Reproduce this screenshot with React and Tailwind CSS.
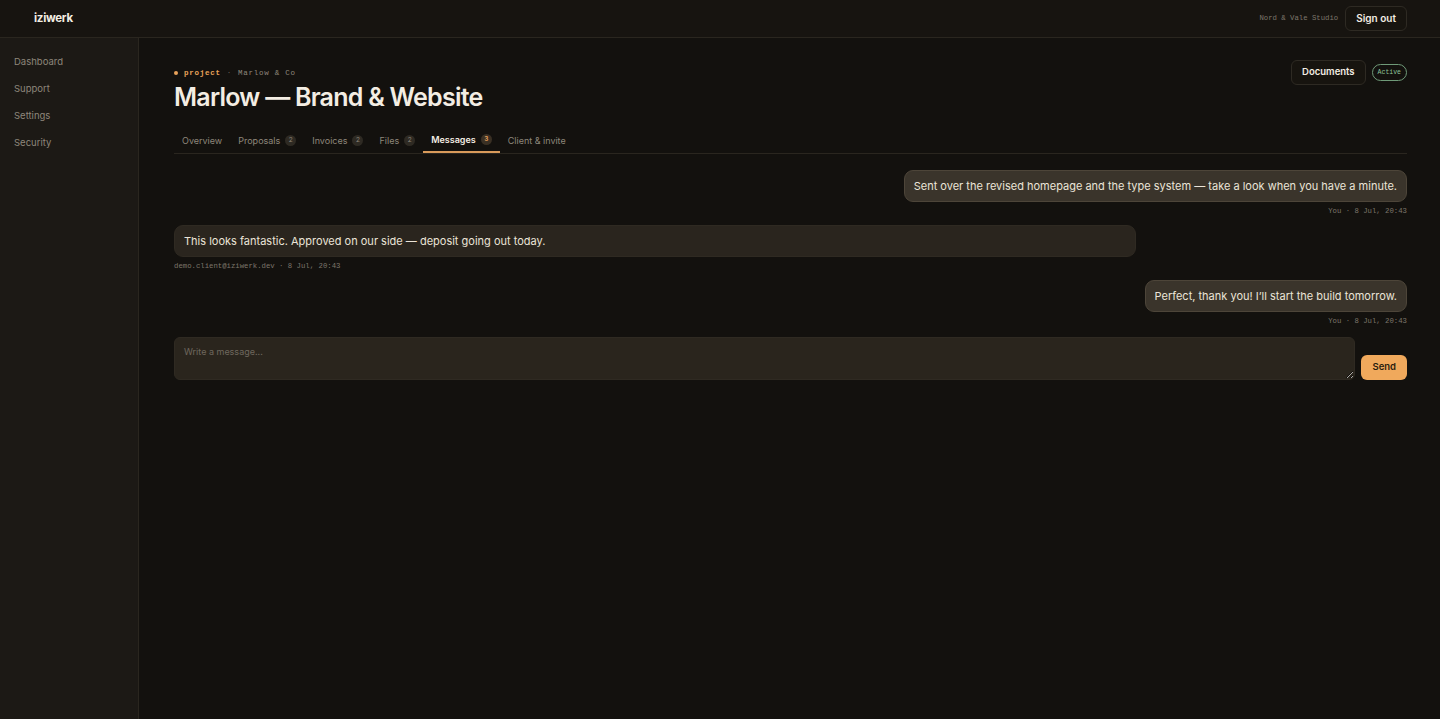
import { useState } from "react";

const sans = { fontFamily: "Inter, 'Noto Sans', sans-serif" };

const navItems = ["Dashboard", "Support", "Settings", "Security"];

const tabs = [
  { label: "Overview" },
  { label: "Proposals", count: 2 },
  { label: "Invoices", count: 2 },
  { label: "Files", count: 2 },
  { label: "Messages", count: 3, active: true },
  { label: "Client & invite" },
];

const messages = [
  {
    id: 1,
    mine: true,
    text: "Sent over the revised homepage and the type system — take a look when you have a minute.",
    meta: "You · 8 Jul, 20:43",
  },
  {
    id: 2,
    mine: false,
    text: "This looks fantastic. Approved on our side — deposit going out today.",
    meta: "demo.client@iziwerk.dev · 8 Jul, 20:43",
  },
  {
    id: 3,
    mine: true,
    text: "Perfect, thank you! I’ll start the build tomorrow.",
    meta: "You · 8 Jul, 20:43",
  },
];

function Message({ msg }) {
  if (msg.mine) {
    return (
      <div className="flex flex-col items-end">
        <div className="h-[32px] flex items-center px-[9px] rounded-[9px] bg-[#3a342b] border border-[#4d4539] text-[11px] text-[#ebe4d8]">
          {msg.text}
        </div>
        <div className="mt-[3px] font-mono text-[7.3px] leading-[12px] text-[#7d766b]">
          {msg.meta}
        </div>
      </div>
    );
  }
  return (
    <div className="flex flex-col items-start">
      <div className="w-[962px] h-[32px] flex items-center px-[9px] rounded-[9px] bg-[#2a251e] border border-[#2f2a22] text-[11px] text-[#ebe4d8]">
        {msg.text}
      </div>
      <div className="mt-[3px] font-mono text-[7.3px] leading-[12px] text-[#7d766b]">
        {msg.meta}
      </div>
    </div>
  );
}

export default function App() {
  const [draft, setDraft] = useState("");
  return (
    <div className="h-[719px] flex flex-col bg-[#13110e] text-[#ebe4d8]" style={sans}>
      <header className="h-[38px] shrink-0 flex items-center justify-between pl-[34px] pr-[33px] bg-[#171410] border-b border-[#2a261f]">
        <div className="text-[11.5px] font-bold tracking-tight text-[#f3ede3]">iziwerk</div>
        <div className="flex items-center gap-[7px]">
          <span className="font-mono text-[7.3px] text-[#7d766b]">Nord &amp; Vale Studio</span>
          <button className="h-[25px] px-[10px] rounded-[6px] border border-[#2e2a23] bg-[#17140f] text-[10px] font-semibold text-[#f3ede3]">
            Sign out
          </button>
        </div>
      </header>

      <div className="flex flex-1 min-h-0">
        <aside className="w-[139px] shrink-0 bg-[#1c1915] border-r border-[#2a261f] pt-[11px] px-[14px]">
          <nav className="flex flex-col">
            {navItems.map((item) => (
              <a key={item} className="h-[27px] flex items-center text-[9.5px] text-[#8e877b]">
                {item}
              </a>
            ))}
          </nav>
        </aside>

        <main className="flex-1 pl-[35px] pr-[33px] pt-[29px]">
          <div className="flex items-start justify-between">
            <div>
              <div className="flex items-center gap-[6px] font-mono text-[7.5px] tracking-[0.1em] leading-[12px]">
                <span className="w-[4px] h-[4px] rounded-full bg-[#e9a25a]" />
                <span className="font-bold text-[#e9a25a]">project</span>
                <span className="text-[#6f685d]">·</span>
                <span className="text-[#8e877b]">Marlow &amp; Co</span>
              </div>
              <h1 className="mt-[3px] text-[25px] leading-[30px] font-semibold tracking-[-0.03em] text-[#f3ede3]">
                Marlow — Brand &amp; Website
              </h1>
            </div>
            <div className="flex items-center gap-[6px] mt-[-7px]">
              <button className="h-[25px] px-[10px] rounded-[6px] border border-[#2e2a23] bg-[#17140f] text-[9.5px] font-semibold text-[#f3ede3]">
                Documents
              </button>
              <span className="h-[17px] px-[5px] flex items-center rounded-full border border-[#6f9a78] font-mono text-[6.5px] text-[#8fc49a]">
                Active
              </span>
            </div>
          </div>

          <div className="mt-[15px] flex border-b border-[#2a261f]">
            {tabs.map((tab) => (
              <div
                key={tab.label}
                className={
                  tab.active
                    ? "h-[26px] flex items-center gap-[5px] px-[8px] pt-[1px] border-b-2 border-[#d99a5a] mb-[-1px] text-[9px] font-semibold text-[#f3ede3]"
                    : "h-[26px] flex items-center gap-[5px] px-[8px] pt-[1px] text-[9px] text-[#8e877b]"
                }
              >
                {tab.label}
                {tab.count && (
                  <span
                    className={
                      tab.active
                        ? "h-[11px] min-w-[11px] px-[3px] flex items-center justify-center rounded-full bg-[#3a3024] text-[6.5px] text-[#e9a25a]"
                        : "h-[11px] min-w-[11px] px-[3px] flex items-center justify-center rounded-full bg-[#2e2a23] text-[6.5px] text-[#8e877b]"
                    }
                  >
                    {tab.count}
                  </span>
                )}
              </div>
            ))}
          </div>

          <div className="mt-[16px] flex flex-col gap-[8px]">
            {messages.map((msg) => (
              <Message key={msg.id} msg={msg} />
            ))}
          </div>

          <div className="mt-[10px] flex items-end gap-[6px]">
            <textarea
              value={draft}
              onChange={(e) => setDraft(e.target.value)}
              placeholder="Write a message..."
              className="flex-1 h-[43px] rounded-[6px] bg-[#2a251d] border border-[#2f2a22] px-[9px] py-[7px] text-[9px] text-[#ebe4d8] placeholder:text-[#6f685d] outline-none"
            />
            <button className="h-[25px] px-[11px] rounded-[6px] bg-[#f0a95c] text-[9.5px] font-semibold text-[#2a1d0f]">
              Send
            </button>
          </div>
        </main>
      </div>
    </div>
  );
}
